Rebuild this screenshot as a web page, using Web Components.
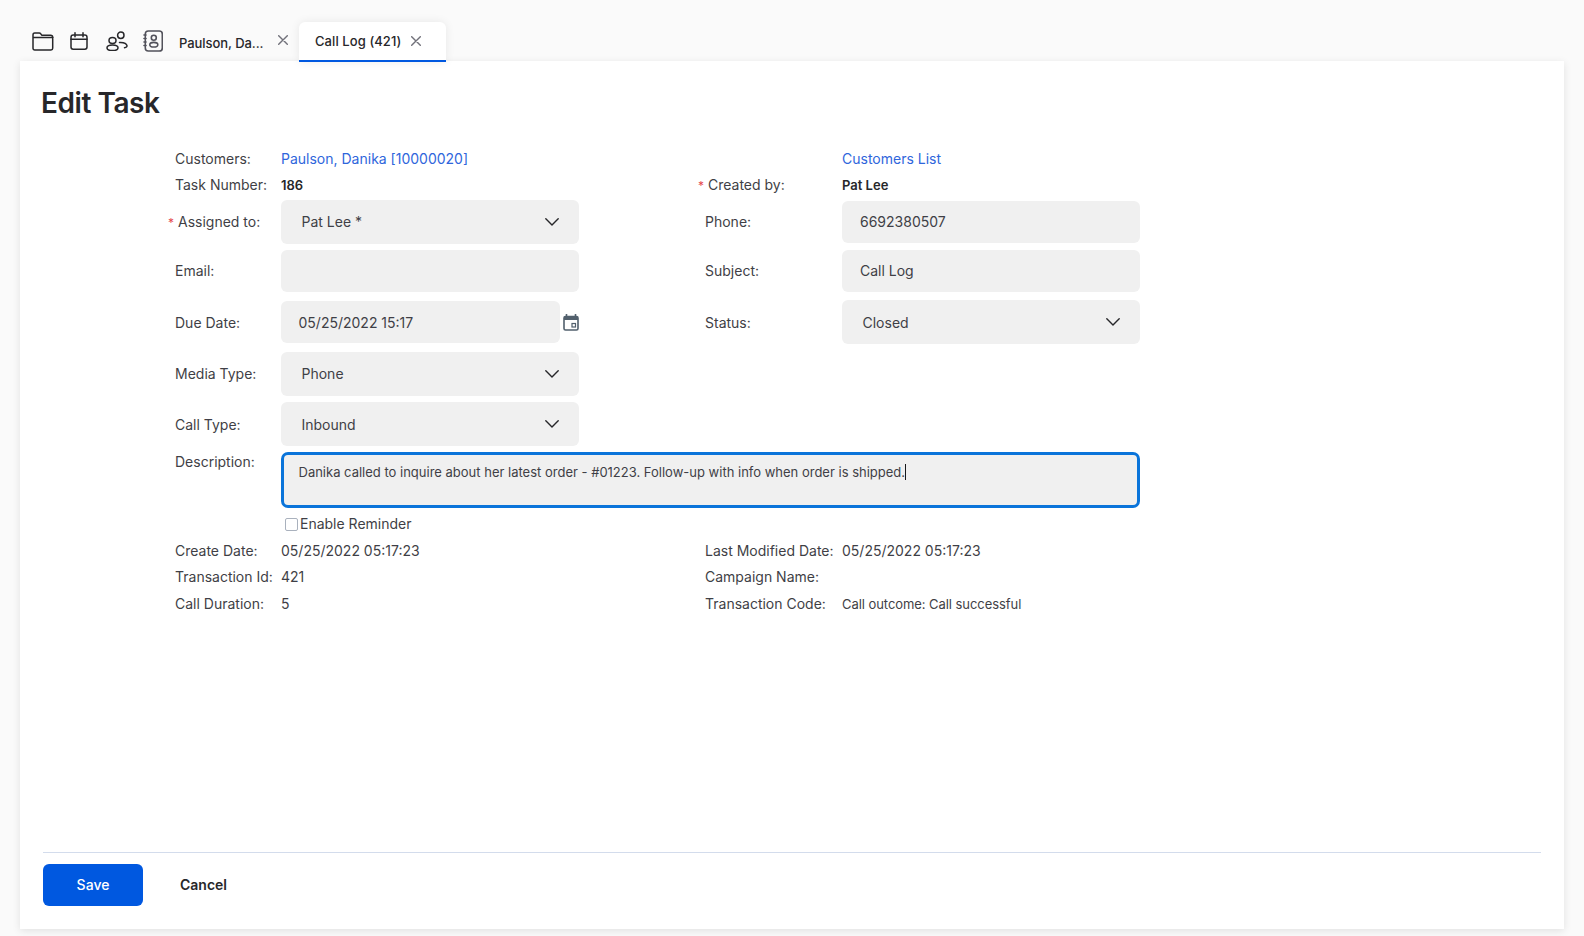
<!DOCTYPE html>
<html lang="en"><head><meta charset="utf-8"><title>Edit Task</title>
<style>
html,body{margin:0;height:100%;background:#fafafa}
body{font:14px/20px Inter,"Liberation Sans",sans-serif;color:#3f3f46}
</style></head><body>
<task-app>
  <tab-bar slot="tabs">
    <nav-icon name="folder"></nav-icon><nav-icon name="calendar"></nav-icon><nav-icon name="people"></nav-icon><nav-icon name="contact"></nav-icon>
    <tab-item>Paulson, Da...</tab-item>
    <tab-item active>Call Log (421)</tab-item>
  </tab-bar>
  <edit-form></edit-form>
</task-app>
<script>
const chevron='<svg width="14" height="8" viewBox="0 0 14 8" fill="none" stroke="#27272a" stroke-width="1.4" stroke-linecap="round" stroke-linejoin="round"><path d="M.8.8 7 7 13.2.8"/></svg>';
function def(name,html){customElements.define(name,class extends HTMLElement{
  connectedCallback(){if(this.shadowRoot)return;this.attachShadow({mode:'open'}).innerHTML=html;}
});}
def('task-app',`<style>:host{display:flex;flex-direction:column;padding:22px 20px 0}
.panel{background:#fff;height:868px;box-shadow:0 2px 8px rgba(0,0,0,.1);position:relative;display:flex;flex-direction:column}
.head{position:relative;z-index:1;margin-bottom:-1px}</style>
<div class="head"><slot name="tabs"></slot></div><div class="panel"><slot></slot></div>`);
def('tab-bar',`<style>:host{display:flex;height:40px;padding-left:10px;align-items:flex-start}</style><slot></slot>`);
const icons={
 folder:[22,19,'<path d="M1 3C1 1.800 1.700 1 2.700 1h4.500c.9 0 1.300.4 1.800 1.100l.7 1.100h8.900c1.200 0 2.100.9 2.100 2.100v11c0 1-.7 1.700-1.700 1.700H2.700C1.700 18 1 17.300 1 16.300z M1 5.500h20"/>'],
 calendar:[18,18,'<rect x="1" y="3" width="16" height="14.200" rx="2.200"/><path d="M1 7.200h16M5 .8v4M13 .8v4"/>'],
 people:[22,20,'<circle cx="14.800" cy="4.200" r="3.200"/><ellipse cx="6.500" cy="9.500" rx="3.500" ry="3"/><ellipse cx="6.500" cy="16.800" rx="5.500" ry="2.800"/><path d="M13.500 11.500c3.500-.2 7 1 7.500 3.200.2 1-.7 1.800-2.500 2"/>'],
 contact:[20,22,'<rect x="2.300" y="1" width="17" height="20" rx="3"/><circle cx="10.800" cy="7.800" r="2.500"/><ellipse cx="10.800" cy="14.700" rx="4" ry="2.300"/><path d="M1 5h2M1 8.500h2M1 12h2M1 15.500h2"/>']
};
customElements.define('nav-icon',class extends HTMLElement{connectedCallback(){if(this.shadowRoot)return;
 const n=this.getAttribute('name');const [w,h,p]=icons[n];
 this.attachShadow({mode:'open'}).innerHTML=`<style>:host{display:flex;align-items:center;height:38px;margin-left:${{folder:2,calendar:16,people:18,contact:15}[n]}px}svg{display:block}</style><svg width="${w}" height="${h}" viewBox="0 0 ${w} ${h}" fill="none" stroke="${n==='contact'?'#52525b':'#27272a'}" stroke-width="${n==='contact'?1.6:1.5}" stroke-linecap="round" stroke-linejoin="round">${p}</svg>`;}});
customElements.define('tab-item',class extends HTMLElement{connectedCallback(){if(this.shadowRoot)return;
 const a=this.hasAttribute('active');
 this.attachShadow({mode:'open'}).innerHTML=`<style>
 :host{display:flex;align-items:center;box-sizing:border-box;height:40px;font-size:13px;font-weight:500;color:#27272a;white-space:nowrap;
  ${a?'width:147px;padding-left:16px;background:#fff;border-radius:6px 6px 0 0;border-bottom:2px solid #0058e0;box-shadow:0 0 10px rgba(0,0,0,.08);padding-bottom:1px;letter-spacing:.08px;':'width:136px;padding-left:16px;margin-top:1px;letter-spacing:-.06px;'}}
 .t{display:block;${a?'':'width:83px'}}
 svg{margin-left:${a?'10':'16'}px;margin-top:${a?'1':'-6'}px;flex:none}</style>
 <span class="t"><slot></slot></span><svg width="10" height="10" viewBox="0 0 10 10" stroke="#71717a" stroke-width="1.400" stroke-linecap="round"><path d="M.7.7l8.600 8.600M9.300.7.7 9.300"/></svg>`;}});
def('form-label',`<style>:host{display:block;position:relative;white-space:nowrap;color:#3f3f46}
 :host([req]){padding-left:3px}
 :host([nudge]){padding-top:2px}
 :host([req])::before{content:"*";position:absolute;left:-7px;top:1px;color:#e5484d;font-size:12px}</style><slot></slot>`);
def('field-box',`<style>:host{display:flex;align-items:center;justify-content:space-between;box-sizing:border-box;width:298px;height:42px;padding:0 18px;background:#f0f0f0;border-radius:6px;color:#3f3f46}
 :host([select]){height:44px;padding:0 20px 0 20.5px}
 :host([date]){width:279px;padding-left:17.5px}
 :host([nudge]) span{padding-top:2px}
 svg{display:none;flex:none}:host([select]) svg{display:block}</style><span><slot></slot></span>${chevron}`);
def('edit-form',`<style>
:host{display:flex;flex-direction:column;flex:1;min-height:0}
h1{margin:0;padding:25px 0 0 21px;height:61px;box-sizing:border-box;font-size:28px;line-height:34px;font-weight:600;color:#27272a;letter-spacing:-.45px}
.grid{display:grid;grid-template-columns:106px 298px 126px 137px 298px;grid-template-rows:26px 26px 48px 49px 54px 50px 50px 62px 26px 28px 24px 30px;margin:24px 0 0 155px;align-items:center}
a{color:#2f66dc;text-decoration:none}
b{font-size:13px;font-weight:600;color:#27272a}
.c1{grid-column:1}.c2{grid-column:2}.c4{grid-column:4}.c5{grid-column:5}
.cdate{display:flex;justify-content:space-between;align-items:center}
.desc{grid-column:2/span 4;align-self:start;margin-top:3px;box-sizing:border-box;height:56px;border:3px solid #0a74da;border-radius:7px;background:#f0f0f0;padding:7px 15px 7px 14.5px;font-size:13px;line-height:20px}
.caret{display:inline-block;width:1px;height:16px;background:#18181b;vertical-align:-3px}
.dl{align-self:start;margin-top:3px}
.rem{grid-column:2/span 4;display:flex;align-items:center;gap:2px;padding-left:4px}
.box{width:13px;height:13px;box-sizing:border-box;border:1px solid #a9b1bd;border-radius:2px;background:#fff}
small{font-size:13px;letter-spacing:-.06px}
.foot{margin:auto 23px 0;border-top:1px solid #d3dcec;padding:11px 0 23px;display:flex;align-items:center}
.save{width:100px;height:42px;border-radius:6px;background:#0058e0;color:#fff;font-weight:500;display:flex;align-items:center;justify-content:center}
.cancel{margin-left:37px;font-weight:600;color:#27272a}
.grid,.foot{flex:none}
</style>
<h1>Edit Task</h1>
<div class="grid">
<form-label class="c1">Customers:</form-label><a class="c2" href="#">Paulson, Danika [10000020]</a><span class="c4"></span><a class="c5" href="#">Customers List</a>
<form-label class="c1">Task Number:</form-label><b class="c2">186</b><form-label class="c4" req>Created by:</form-label><b class="c5">Pat Lee</b>
<form-label class="c1" req>Assigned to:</form-label><field-box class="c2" select>Pat Lee *</field-box><form-label class="c4">Phone:</form-label><field-box class="c5">6692380507</field-box>
<form-label class="c1">Email:</form-label><field-box class="c2"></field-box><form-label class="c4">Subject:</form-label><field-box class="c5">Call Log</field-box>
<form-label class="c1" nudge>Due Date:</form-label><div class="c2 cdate"><field-box date nudge>05/25/2022 15:17</field-box><svg width="16" height="17" viewBox="0 0 16 17" fill="none"><path d="M3.500 0v3M12.500 0v3" stroke="#52606d" stroke-width="1.600"/><rect x="1" y="2.500" width="14" height="13.500" rx="1.500" stroke="#52606d" stroke-width="1.600"/><path d="M1 3h14v3H1z" fill="#52606d"/><rect x="9" y="9.500" width="3.500" height="3.500" stroke="#52606d" stroke-width="1.200"/></svg></div><form-label class="c4" nudge>Status:</form-label><field-box class="c5" select nudge>Closed</field-box>
<form-label class="c1">Media Type:</form-label><field-box class="c2" select>Phone</field-box><span class="c4"></span><span class="c5"></span>
<form-label class="c1" nudge>Call Type:</form-label><field-box class="c2" select nudge>Inbound</field-box><span class="c4"></span><span class="c5"></span>
<form-label class="c1 dl">Description:</form-label><div class="desc">Danika called to inquire about her latest order - #01223. Follow-up with info when order is shipped.<span class="caret"></span></div>
<span class="c1"></span><label class="rem"><span class="box"></span>Enable Reminder</label>
<form-label class="c1">Create Date:</form-label><span class="c2">05/25/2022 05:17:23</span><form-label class="c4">Last Modified Date:</form-label><span class="c5">05/25/2022 05:17:23</span>
<form-label class="c1">Transaction Id:</form-label><span class="c2">421</span><form-label class="c4">Campaign Name:</form-label><span class="c5"></span>
<form-label class="c1">Call Duration:</form-label><span class="c2">5</span><form-label class="c4">Transaction Code:</form-label><small class="c5">Call outcome: Call successful</small>
</div>
<div class="foot"><div class="save">Save</div><div class="cancel">Cancel</div></div>`);
</script>
</body></html>
